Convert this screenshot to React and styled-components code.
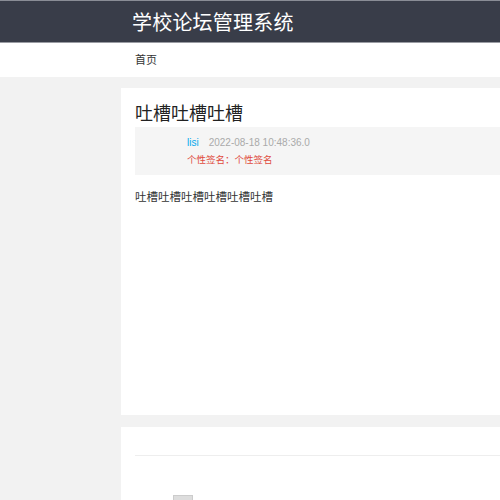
import React from "react";
import styled, { createGlobalStyle } from "styled-components";

const Global = createGlobalStyle`
  html, body { margin: 0; padding: 0; background: #f2f2f2; overflow: hidden; }
  body { font-family: "Liberation Sans", "Noto Sans CJK SC", Arial, sans-serif; color: #333; }
`;

const Header = styled.header`
  background: #393d49;
  border-top: 1px solid #8a8d96;
  border-bottom: 1px solid #9a9ca3;
  box-sizing: border-box;
  height: 43px;
  display: flex;
  align-items: center;
  padding-left: 132px;
`;

const Logo = styled.h1`
  margin: 0;
  font-family: "Noto Sans CJK SC", sans-serif;
  font-size: 20px;
  font-weight: normal;
  color: #fff;
  letter-spacing: 0.2px;
`;

const Nav = styled.nav`
  height: 34px;
  background: #fff;
  display: flex;
  align-items: center;
  padding-left: 135px;
`;

const NavItem = styled.a`
  font-size: 11px;
  color: #333;
  text-decoration: none;
  margin-top: -3px;
`;

const Main = styled.main`
  padding: 11px 0 0 121px;
  display: flex;
  flex-direction: column;
  gap: 12px;
  width: 900px;
`;

const Card = styled.section`
  background: #fff;
  padding: 0 14px;
  height: ${(p) => p.$h}px;
  box-sizing: border-box;
`;

const Title = styled.h2`
  margin: 0;
  padding-top: 12px;
  font-family: "Noto Sans CJK SC", sans-serif;
  font-size: 18px;
  line-height: 24px;
  font-weight: normal;
  color: #222;
`;

const Meta = styled.div`
  margin-top: 3px;
  background: #f5f5f5;
  height: 48px;
  padding: 9px 0 0 52px;
  box-sizing: border-box;
  display: flex;
  flex-direction: column;
  gap: 4px;
`;

const MetaRow = styled.div`
  display: flex;
  gap: 10px;
  font-size: 10px;
  line-height: 13px;
`;

const User = styled.span`
  color: #01aaed;
`;

const Time = styled.span`
  color: #aaa;
`;

const Sign = styled.span`
  color: #e04a3c;
  font-size: 9.5px;
  line-height: 13px;
`;

const Content = styled.p`
  margin: 14px 0 0;
  font-size: 11.5px;
  line-height: 16px;
  color: #333;
`;

const Divider = styled.hr`
  margin: 28px 0 0;
  border: none;
  border-top: 1px solid #eee;
`;

const Avatar = styled.div`
  margin: 39px 0 0 38px;
  width: 18px;
  height: 10px;
  background: #ddd;
  border: 1px solid #ccc;
`;

export default function App() {
  return (
    <>
      <Global />
      <Header>
        <Logo>学校论坛管理系统</Logo>
      </Header>
      <Nav>
        <NavItem href="#">首页</NavItem>
      </Nav>
      <Main>
        <Card $h={327}>
          <Title>吐槽吐槽吐槽</Title>
          <Meta>
            <MetaRow>
              <User>lisi</User>
              <Time>2022-08-18 10:48:36.0</Time>
            </MetaRow>
            <Sign>个性签名：个性签名</Sign>
          </Meta>
          <Content>吐槽吐槽吐槽吐槽吐槽吐槽</Content>
        </Card>
        <Card $h={200}>
          <Divider />
          <Avatar />
        </Card>
      </Main>
    </>
  );
}
